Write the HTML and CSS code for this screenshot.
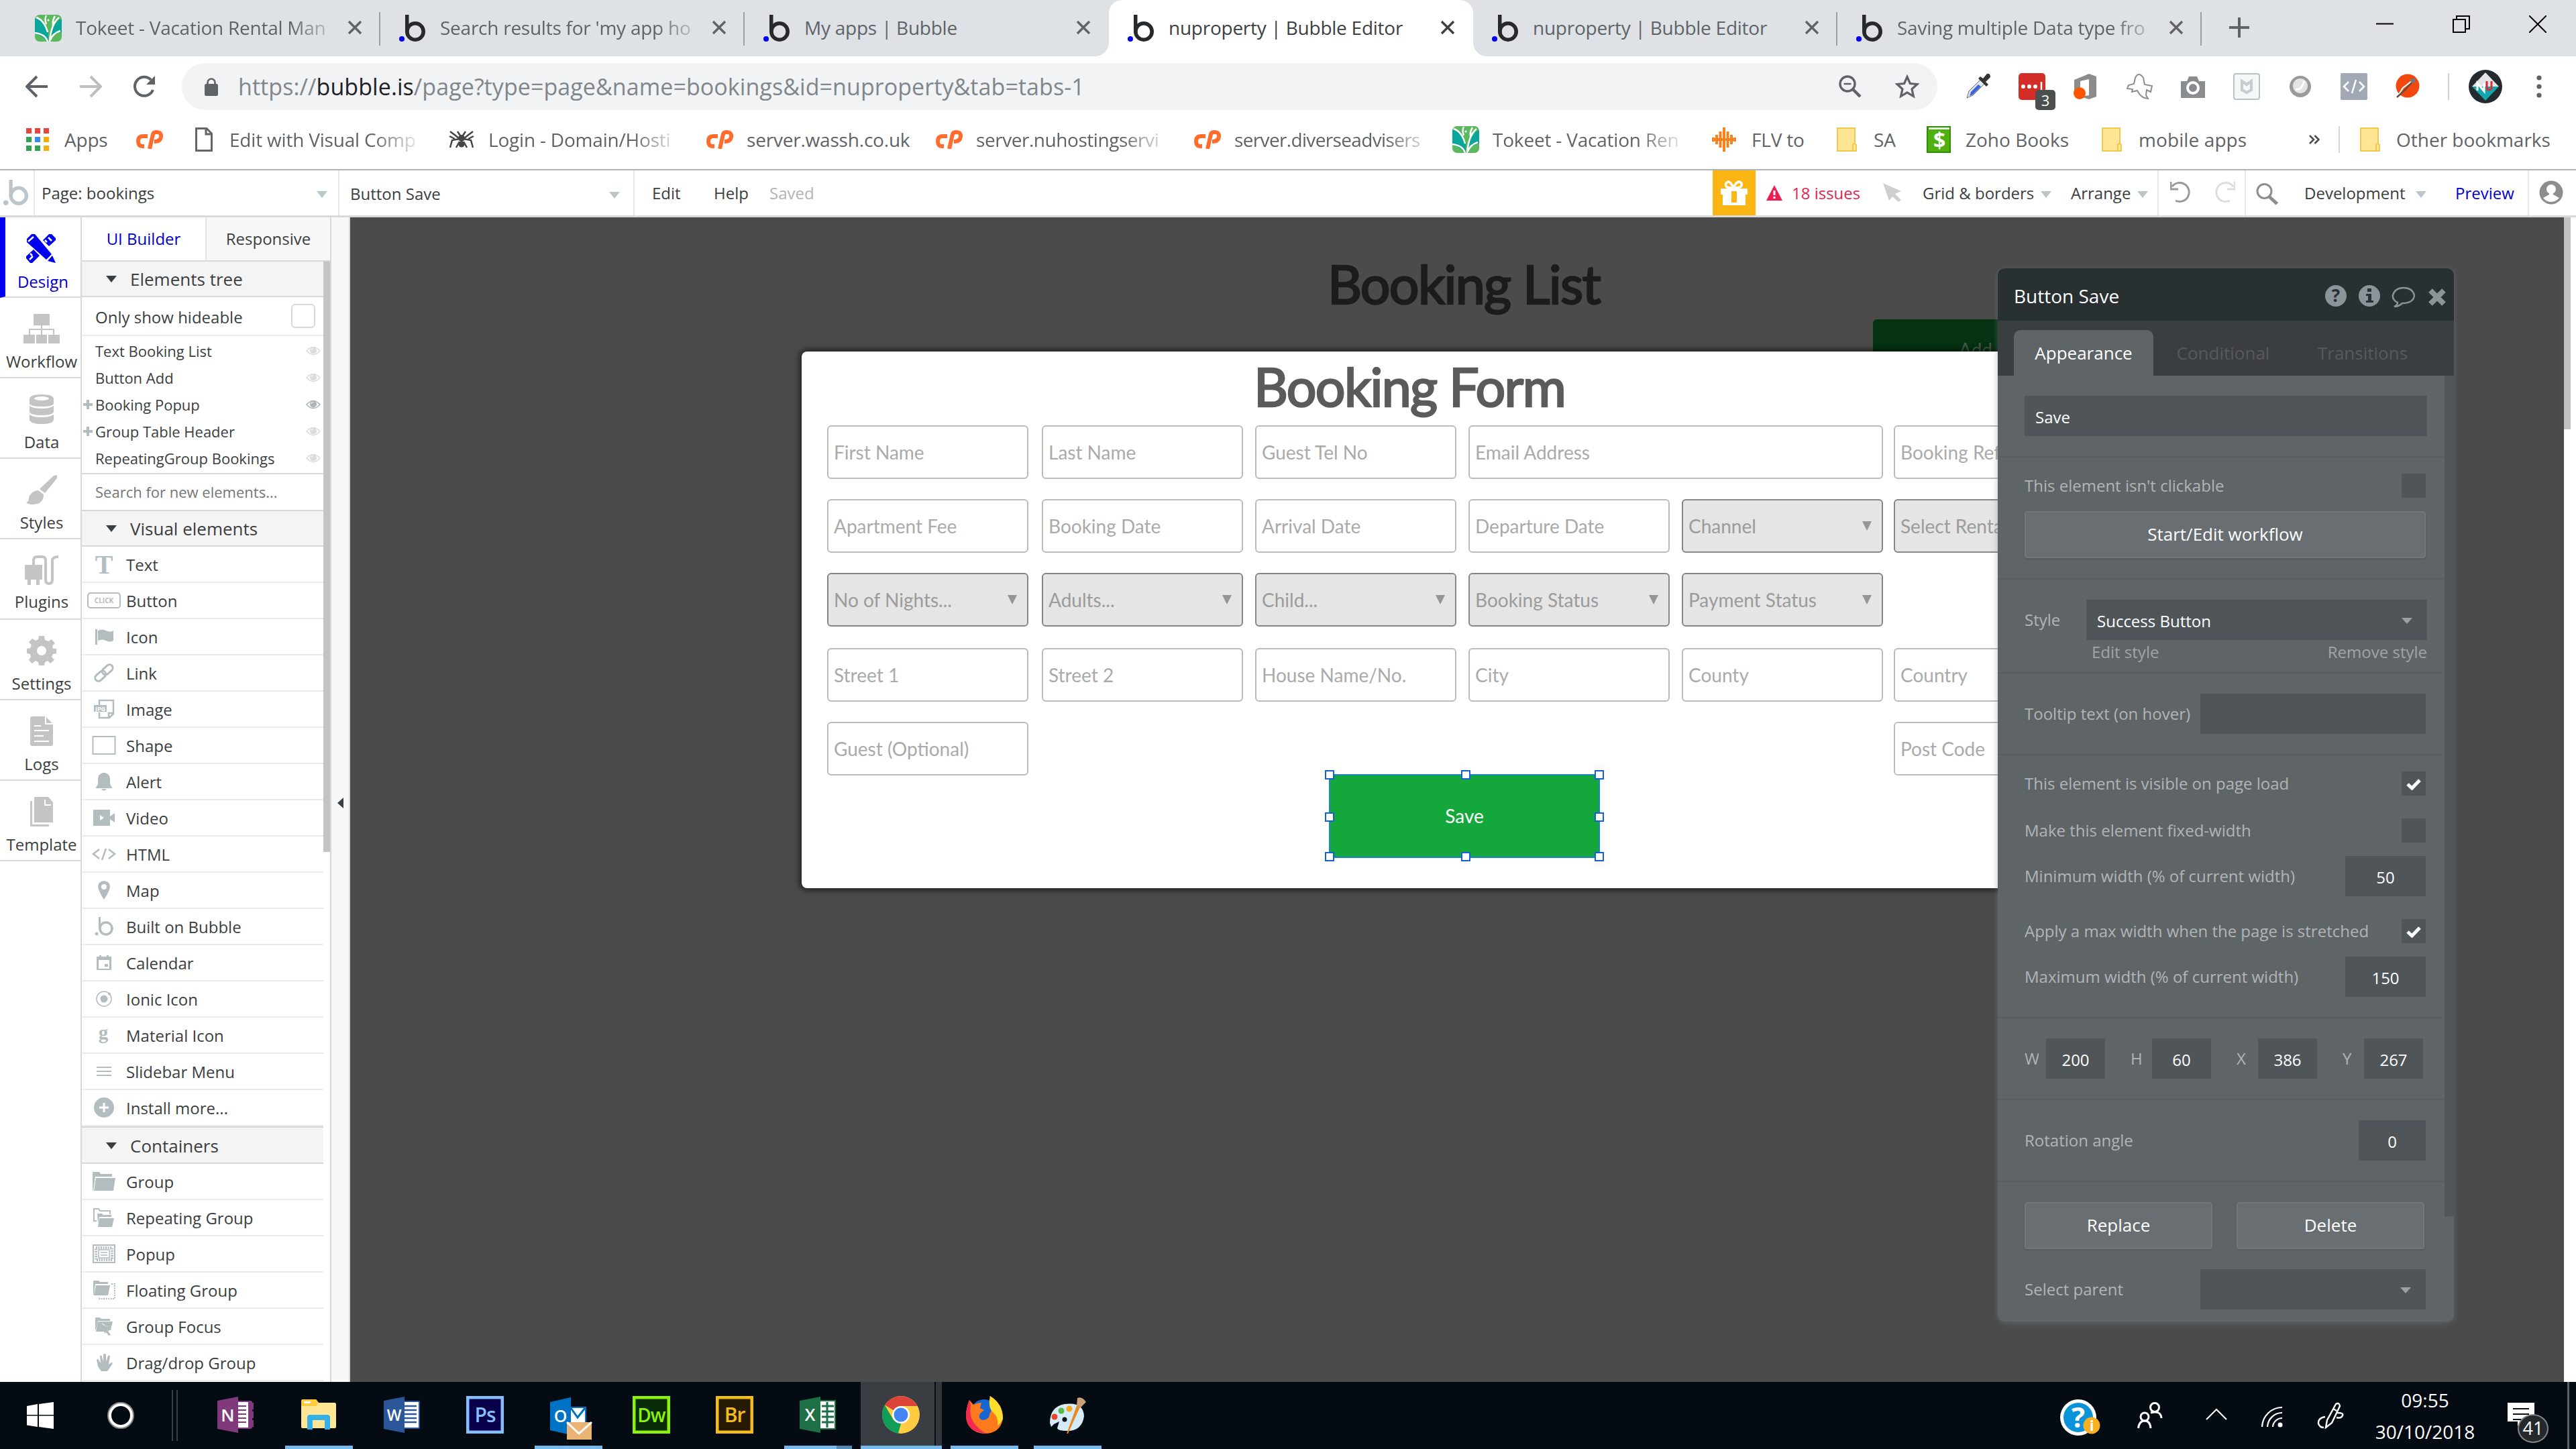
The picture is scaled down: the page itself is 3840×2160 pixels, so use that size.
FILE: index.html
```html
<!DOCTYPE html>
<html lang="en">
<head>
  <meta charset="UTF-8">
  <title>nuproperty | Bubble Editor</title>
  <link rel="stylesheet" href="styles.css">
</head>
<body>
  <!-- Shared icons -->
  <svg class="sprite" xmlns="http://www.w3.org/2000/svg">
    <symbol id="i-bubble" viewBox="0 0 40 40"><rect x="9" width="5.5" height="26"/><circle cx="24" cy="25" r="12.2" fill="none" stroke="currentColor" stroke-width="5.6"/><circle class="dot" cx="4" cy="36" r="4"/></symbol>
    <symbol id="i-tokeet" viewBox="0 0 40 40"><rect width="40" height="40" rx="7" fill="#5cb85f"/><path d="M2 5Q10 6 15 16L20 26V40Q8 30 0 28V6ZM38 6Q28 14 26 24L24 34Q32 27 40 26V8Z" fill="#0ba69b"/><path d="M0 27Q16 29 19 40M2 4Q14 8 19 26M36 4Q24 14 22 40M38 24Q26 28 23 38M17 14Q14 6 17 1M27 16Q26 8 30 2" fill="none" stroke="#fff" stroke-width="2.4"/><circle cx="20" cy="8" r="1.6" fill="#fff"/><circle cx="27" cy="10" r="1.6" fill="#fff"/></symbol>
    <symbol id="i-x" viewBox="0 0 22 22"><path d="M2 2L20 20M20 2L2 20" fill="none" stroke="currentColor" stroke-width="3.4"/></symbol>
    <symbol id="i-cp" viewBox="0 0 40 28"><path d="M17 9H10Q3 9 3 16.500T9 24H12M20 28L25 6Q26 3 30 3 38 3 37 10 36 17 27 17" fill="none" stroke="#ff6c2c" stroke-width="6"/></symbol>
    <symbol id="i-folder" viewBox="0 0 30 36"><path d="M1 1H27V24L29 26V35H1Z" fill="#ffe594" stroke="#efc94f" stroke-width="2"/><path d="M24 35V26Q24 24 27 24" fill="none" stroke="#efc94f" stroke-width="2"/></symbol>
    <symbol id="i-eye" viewBox="0 0 22 16"><path d="M1 8Q11-3 21 8 11 19 1 8Z" fill="none" stroke="currentColor" stroke-width="1.6"/><circle cx="11" cy="7.500" r="5"/><path d="M8 7Q8 4.500 11 4.500" fill="none" stroke="#fff"/></symbol>
    <symbol id="i-check" viewBox="0 0 22 18"><path d="M2 9L8.500 15 20 3" fill="none" stroke="#fff" stroke-width="5"/></symbol>
  </svg>

  <!-- Browser tabs -->
  <div class="tabstrip">
    <div class="tab"><svg class="fav"><use href="#i-tokeet"/></svg><span class="fade">Tokeet - Vacation Rental Man</span><svg class="tab-x"><use href="#i-x"/></svg></div>
    <div class="tab"><svg class="fav"><use href="#i-bubble"/></svg><span class="fade">Search results for 'my app ho</span><svg class="tab-x"><use href="#i-x"/></svg></div>
    <div class="tab before-active"><svg class="fav"><use href="#i-bubble"/></svg><span>My apps | Bubble</span><svg class="tab-x"><use href="#i-x"/></svg></div>
    <div class="tab active"><svg class="fav"><use href="#i-bubble"/></svg><span>nuproperty | Bubble Editor</span><svg class="tab-x"><use href="#i-x"/></svg></div>
    <div class="tab"><svg class="fav"><use href="#i-bubble"/></svg><span>nuproperty | Bubble Editor</span><svg class="tab-x"><use href="#i-x"/></svg></div>
    <div class="tab"><svg class="fav"><use href="#i-bubble"/></svg><span class="fade">Saving multiple Data type fro</span><svg class="tab-x"><use href="#i-x"/></svg></div>
    <svg class="new-tab" viewBox="0 0 32 32"><path d="M16 1V31M1 16H31" stroke="#5f6368" stroke-width="4"/></svg>
    <div class="win-buttons">
      <svg viewBox="0 0 26 26"><path d="M0 12.500H26" stroke="#000" stroke-width="2"/></svg>
      <svg viewBox="0 0 26 26"><path d="M1 6H19V25H1ZM6 6V1H25V20H19" fill="none" stroke="#000" stroke-width="2"/></svg>
      <svg viewBox="0 0 26 26"><path d="M0 0L26 26M26 0L0 26" stroke="#000" stroke-width="2"/></svg>
    </div>
  </div>

  <!-- Address bar -->
  <div class="toolbar">
    <svg class="nav-ico" viewBox="0 0 34 34"><path d="M33 17H3M17 2L2 17 17 32" fill="none" stroke="#5f6368" stroke-width="4"/></svg>
    <svg class="nav-ico" viewBox="0 0 34 34"><path d="M1 17H31M17 2L32 17 17 32" fill="none" stroke="#bcbec0" stroke-width="4"/></svg>
    <svg class="nav-ico" viewBox="0 0 34 34"><path d="M30 22A14 14 0 1 1 27 7" fill="none" stroke="#5f6368" stroke-width="4"/><path d="M33 1V14H20Z" fill="#5f6368"/></svg>
    <div class="omnibox">
      <svg class="lock" viewBox="0 0 20 27"><rect y="9" width="20" height="18" rx="2.500" fill="#5f6368"/><path d="M4.500 10V7A5.500 5.500 0 0 1 15.500 7V10" fill="none" stroke="#5f6368" stroke-width="2.600"/></svg>
      <div class="url">https://<b>bubble.is</b>/page?type=page&amp;name=bookings&amp;id=nuproperty&amp;tab=tabs-1</div>
      <svg class="omni-zoom" viewBox="0 0 34 34"><circle cx="13" cy="13" r="11" fill="none" stroke="#5f6368" stroke-width="3.400"/><path d="M7.500 13H18.500" stroke="#5f6368" stroke-width="2.500"/><path d="M21 21L32 32" stroke="#5f6368" stroke-width="4.500"/></svg>
      <svg class="omni-star" viewBox="0 0 36 36"><path d="M18 3.500L22.400 13.500 33 14.500 25 21.700 27.400 32.500 18 26.900 8.600 32.500 11 21.700 3 14.500 13.600 13.500Z" fill="none" stroke="#5f6368" stroke-width="3.200"/></svg>
    </div>
    <div class="extensions">
      <svg viewBox="0 0 40 40"><path d="M3 37L6 27 23 10 29 16 12 33Z" fill="#dfe6f5" stroke="#667"/><path d="M7 34L9 28 20 17 24 20 12 32Z" fill="#3b66d6"/><path d="M20 8L32 20 35 17 31 13 38 6Q38 0 33 1L27 8 23 5Z" fill="#333"/></svg>
      <div class="ext-pass"><svg viewBox="0 0 40 40"><rect width="40" height="40" rx="5" fill="#d32d27"/><circle cx="7" cy="20" r="3" fill="#fff"/><circle cx="16" cy="20" r="3" fill="#fff"/><circle cx="25" cy="20" r="3" fill="#fff"/><path d="M34 13V27" stroke="#fff" stroke-width="2.500"/></svg><span>3</span></div>
      <svg viewBox="0 0 40 40"><path d="M3 10L25 1 36 5V35L25 39 12 35 25 33V9L12 12V28L3 31Z" fill="#8c8c8c"/><circle cx="11" cy="30" r="9" fill="#ff5400"/></svg>
      <svg viewBox="0 0 40 40"><path d="M14 7Q19-3 26 7L28 17 39 19 37 28 31 25 30 33 33 38Q23 38 17 26L9 28 10 24 2 23 4 18 12 16Z" fill="#fff" stroke="#8d8d8d" stroke-width="2"/></svg>
      <svg viewBox="0 0 40 40"><path d="M2 12H11L14 5H26L29 12H38V37H2Z" fill="#8a8d8f"/><circle cx="20" cy="22" r="8" fill="none" stroke="#fff" stroke-width="4"/></svg>
      <svg viewBox="0 0 40 40"><rect x="1" y="1" width="38" height="38" rx="3" fill="#f4f7f8" stroke="#b8c2c7" stroke-width="2"/><path d="M13 12L20 17 27 12V25L20 29 13 25Z" fill="none" stroke="#c6cdd1" stroke-width="4"/></svg>
      <svg viewBox="0 0 40 40"><circle cx="20" cy="20" r="16" fill="#9a9a9a"/><circle cx="20" cy="19" r="11" fill="#e4e4e4"/><path d="M13 24Q22 26 26 12" fill="none" stroke="#fff" stroke-width="3"/></svg>
      <svg viewBox="0 0 40 40"><rect width="40" height="40" rx="2" fill="#a2a9b4"/><path d="M12 13L5 20 12 27M28 13L35 20 28 27M23 10L17 30" fill="none" stroke="#fff" stroke-width="2.600"/></svg>
      <svg viewBox="0 0 40 40"><circle cx="20" cy="19" r="17.500" fill="#f2480f"/><path d="M3 38L13 22 26 12" fill="none" stroke="#fff" stroke-width="2"/><path d="M4 36L15 26 28 12" fill="none" stroke="#6d4a3a" stroke-width="2.500"/><circle cx="28" cy="11" r="3.500" fill="#777"/></svg>
    </div>
    <svg class="profile" viewBox="0 0 50 50"><circle cx="25" cy="25" r="25" fill="#252a2e"/><path d="M25 4L45 25H5Z" fill="#e3e4e6"/><path d="M5 25H45L25 46Z" fill="#12a5ab"/><path d="M13 31V20L23 32V20" fill="none" stroke="#fff" stroke-width="3"/><path d="M27 17V28Q30 32 34 28V17" fill="none" stroke="#d92c36" stroke-width="3"/></svg>
    <svg class="menu-dots" viewBox="0 0 8 34"><circle cx="4" cy="4" r="3.600"/><circle cx="4" cy="17" r="3.600"/><circle cx="4" cy="30" r="3.600"/></svg>
  </div>

  <!-- Bookmarks -->
  <div class="bookmarks">
    <div class="bm bm-apps"><svg class="s34" viewBox="0 0 34 34"><path d="M0 0h8v8H0zM13 0h8v8h-8zM26 0h8v8h-8z" fill="#e8453c"/><path d="M0 13h8v8H0zM0 26h8v8H0zM13 26h8v8h-8z" fill="#32a350"/><path d="M13 13h8v8h-8z" fill="#3b8bea"/><path d="M26 13h8v8h-8zM26 26h8v8h-8z" fill="#f4ae0c"/></svg><span>Apps</span></div>
    <div class="bm bm-cp"><svg class="cp"><use href="#i-cp"/></svg></div>
    <div class="bm bm-edit"><svg class="page-ico" viewBox="0 0 26 36"><path d="M1.500 1.500H17L24.500 9V34.500H1.500ZM16 1.500V10H24" fill="none" stroke="#666" stroke-width="3"/></svg><span class="fade">Edit with Visual Comp</span></div>
    <div class="bm bm-login"><svg class="s40" viewBox="0 0 40 30"><path d="M3 3L11 9 17 14 6 16 3 27M37 3L29 9 23 14 34 16 37 27M2 10L10 14M38 10L30 14" fill="none" stroke="#444" stroke-width="2.500"/><circle cx="20" cy="13" r="5" fill="#444"/><circle cx="20" cy="22" r="4.500" fill="#444"/><path d="M12 27L17 18M28 27L23 18M14 3L18 9M26 3L22 9" stroke="#444" stroke-width="2.500"/></svg><span class="fade">Login - Domain/Hosti</span></div>
    <div class="bm bm-wassh"><svg class="cp"><use href="#i-cp"/></svg><span>server.wassh.co.uk</span></div>
    <div class="bm bm-nuhost"><svg class="cp"><use href="#i-cp"/></svg><span class="fade">server.nuhostingservi</span></div>
    <div class="bm bm-diverse"><svg class="cp"><use href="#i-cp"/></svg><span class="fade">server.diverseadvisers</span></div>
    <div class="bm bm-tokeet"><svg class="s40"><use href="#i-tokeet"/></svg><span class="fade">Tokeet - Vacation Ren</span></div>
    <div class="bm bm-flv"><svg class="s36" viewBox="0 0 36 36"><path d="M2 15V21M7 11V25M12.500 6V30M18 0V36M23.500 6V30M29 11V25M34 15V21" stroke="#f5821f" stroke-width="4"/><path d="M0 18H36" stroke="#f5821f" stroke-width="4"/></svg><span>FLV to</span></div>
    <div class="bm bm-sa"><svg class="folder"><use href="#i-folder"/></svg><span>SA</span></div>
    <div class="bm bm-zoho"><svg class="zoho" viewBox="0 0 36 40"><rect width="36" height="40" fill="#2f8d0b"/><rect x="2" y="5" width="32" height="33" fill="#50b010"/><path d="M3 2H34V5H3Z" fill="#e9f3e2"/><text x="19" y="33" text-anchor="middle">$</text></svg><span>Zoho Books</span></div>
    <div class="bm bm-mobile"><svg class="folder"><use href="#i-folder"/></svg><span>mobile apps</span></div>
    <svg class="bm-more" viewBox="0 0 16 14"><path d="M1 1L7 7 1 13M8.500 1L14.500 7 8.500 13" fill="none" stroke="#4a4d51" stroke-width="2.600"/></svg>
    <div class="bm bm-other"><svg class="folder"><use href="#i-folder"/></svg><span>Other bookmarks</span></div>
  </div>

  <!-- Editor top bar -->
  <div class="topbar">
    <div class="tb tb-logo"><svg><use href="#i-bubble"/></svg></div>
    <div class="tb tb-page">Page: bookings<i class="caret"></i></div>
    <div class="tb tb-element">Button Save<i class="caret"></i></div>
    <div class="tb tb-menu"><span>Edit</span><span>Help</span><span class="saved">Saved</span></div>
    <div class="tb tb-gift"><svg viewBox="0 0 40 38"><path d="M0 13H40V22H37V38H3V22H0ZM16 17V34H24V17Z" fill="#fff" fill-rule="evenodd"/><path d="M19 12Q5 13 8 5 13-1 19 12Q25-1 31 5 33 13 19 12" fill="none" stroke="#fff" stroke-width="3.500"/></svg></div>
    <div class="tb tb-issues"><svg viewBox="0 0 24 23"><path d="M12 0L24 23H0Z" fill="#f01e50"/><path d="M12 8V15M12 17V20" stroke="#fff" stroke-width="3"/></svg>18 issues</div>
    <div class="tb tb-cursor"><svg viewBox="0 0 28 28"><path d="M0 0L27 12 18 16 27 25 23 28 14 20 9 26Z" fill="#cfcfcf"/></svg></div>
    <div class="tb tb-grid">Grid &amp; borders<i class="caret"></i></div>
    <div class="tb tb-arrange">Arrange<i class="caret"></i></div>
    <div class="tb tb-undo">
      <svg viewBox="0 0 32 32"><path d="M3 7A14 14 0 1 1 8 28" fill="none" stroke="#999" stroke-width="3"/><path d="M1 0V11H12" fill="none" stroke="#999" stroke-width="3"/></svg>
      <svg viewBox="0 0 32 32"><path d="M29 7A14 14 0 1 0 24 28" fill="none" stroke="#ddd" stroke-width="3"/><path d="M31 0V11H20" fill="none" stroke="#ddd" stroke-width="3"/></svg>
    </div>
    <div class="tb tb-search"><svg viewBox="0 0 32 32"><circle cx="12" cy="12" r="10.500" fill="none" stroke="#8d8d8d" stroke-width="3"/><path d="M19 20L31 31" stroke="#8d8d8d" stroke-width="5"/></svg></div>
    <div class="tb tb-dev">Development<i class="caret"></i></div>
    <div class="tb tb-preview">Preview</div>
    <div class="tb tb-user"><svg viewBox="0 0 36 36"><circle cx="18" cy="18" r="17.500" fill="#8d8d8d"/><circle cx="18" cy="13" r="7" fill="#fff"/><path d="M15 15H21V21L30 26Q25 32 18 32T6 26L15 21Z" fill="#fff"/></svg></div>
  </div>

  <div class="workspace">
    <!-- Left navigation -->
    <div class="nav">
      <div class="nav-item active"><svg viewBox="0 0 44 44"><path d="M1 8L8 1H13L38 31 30 39 1 13ZM39 33L44 44 32 41ZM25 10L34 1H38L44 7V10L34 19ZM11 24L20 33 9 44H6L0 37V34Z"/><path d="M33 6L38 11M28 10L31 13M6 30L9 33M5 39L10 34M3 12L11 5" stroke="#fff" stroke-width="2.500" fill="none"/></svg><span>Design</span></div>
      <div class="nav-item"><svg viewBox="0 0 54 44"><path d="M15 0H39V17H15ZM0 31H17V44H0ZM19 31H35V44H19ZM37 31H54V44H37ZM8 22H46V31H44V24H28V31H26V24H10V31H8ZM26 17H28V23H26Z"/></svg><span>Workflow</span></div>
      <div class="nav-item"><svg viewBox="0 0 36 44"><path d="M0 7Q0 0 18 0T36 7V13Q36 18 18 18T0 13ZM0 17Q5 21 18 21T36 17V26Q34 31 18 31T0 26ZM0 30Q5 34 18 34T36 30V38Q34 44 18 44T0 38Z"/><ellipse cx="18" cy="6" rx="11" ry="3" fill="#fff"/></svg><span>Data</span></div>
      <div class="nav-item"><svg viewBox="0 0 46 44"><path d="M45 0Q48 3 45 6L28 27 20 21 40 2Q43 0 45 0ZM18 23L26 29Q26 44 9 44 3 44 0 41 4 40 4 34 7 24 18 23Z"/></svg><span>Styles</span></div>
      <div class="nav-item plugins"><svg viewBox="0 0 50 44"><path d="M0 14H26V36H22V44H17V36H9V44H4V36H0Z"/><path d="M13 15V8Q13 2 18 2H26Q31 2 31 8V36Q31 42 36 42T41 36V8Q41 2 50 2" fill="none" stroke="#c4c4c4" stroke-width="4"/></svg><span>Plugins</span></div>
      <div class="nav-item"><svg viewBox="0 0 44 44"><path d="M18 0H26L27 6 32 8 37 5 42 11 38 15 39 19 44 19V26L39 27 37 31 41 36 35 41 31 37 27 39 26 44H18L17 39 13 37 8 41 3 36 6 31 5 27 0 26V19L5 18 7 14 3 9 8 4 13 7 17 5ZM22 15A7 7 0 1 0 22 29 7 7 0 1 0 22 15Z" fill-rule="evenodd"/></svg><span>Settings</span></div>
      <div class="nav-item"><svg viewBox="0 0 34 44"><path d="M3 0H22V12H34V41Q34 44 31 44H3Q0 44 0 41V3Q0 0 3 0ZM24 1L33 10H24Z"/><path d="M6 21H28M6 29H20M6 37H28M6 14H16" stroke="#fff" stroke-width="2"/></svg><span>Logs</span></div>
      <div class="nav-item"><svg viewBox="0 0 34 44"><path d="M6 0H27L34 8V38H6ZM0 6H3V41H28V44H0Z"/><path d="M22 4V12H31" fill="none" stroke="#fff" stroke-width="2"/></svg><span>Template</span></div>
    </div>

    <!-- Element palette -->
    <div class="palette">
      <div class="palette-tabs"><span class="on">UI Builder</span><span>Responsive</span></div>
      <div class="palette-body">
        <div class="palette-list">
          <div class="head tree-head"><i class="caret dark"></i>Elements tree</div>
          <div class="hideable">Only show hideable<i class="box"></i></div>
          <div class="tree">
            <div>Text Booking List<svg><use href="#i-eye"/></svg></div>
            <div>Button Add<svg><use href="#i-eye"/></svg></div>
            <div class="parent open">Booking Popup<svg><use href="#i-eye"/></svg></div>
            <div class="parent">Group Table Header<svg><use href="#i-eye"/></svg></div>
            <div>RepeatingGroup Bookings<svg><use href="#i-eye"/></svg></div>
          </div>
          <div class="find">Search for new elements...</div>
          <div class="head"><i class="caret dark"></i>Visual elements</div>
          <div class="el"><svg viewBox="0 0 50 30"><text class="serif" x="25" y="29" font-size="40" text-anchor="middle">T</text></svg>Text</div>
          <div class="el"><svg viewBox="0 0 50 30"><rect x="1" y="4" width="48" height="22" rx="4" fill="none" stroke="currentColor" stroke-width="2"/><text x="25" y="19" font-size="10" font-weight="bold" text-anchor="middle">CLICK</text></svg>Button</div>
          <div class="el"><svg viewBox="0 0 50 30"><path d="M12 4H15V27H12ZM16 6Q22 3 28 6T39 6V21Q34 24 28 21T16 21Z"/></svg>Icon</div>
          <div class="el"><svg viewBox="0 0 50 30"><g fill="none" stroke="currentColor" stroke-width="3" transform="rotate(-42 25 15)"><rect x="9" y="10" width="18" height="10" rx="5"/><rect x="23" y="10" width="18" height="10" rx="5"/></g></svg>Link</div>
          <div class="el"><svg viewBox="0 0 50 30"><path d="M18 9V2H39V22L33 28H18V20M32 28V21H39" fill="none" stroke="currentColor" stroke-width="2.500"/><rect x="10" y="9" width="19" height="10"/><text x="19.500" y="17.500" font-size="9" font-weight="bold" fill="#fff" text-anchor="middle">JPG</text></svg>Image</div>
          <div class="el"><svg viewBox="0 0 50 30"><rect x="8.500" y="2" width="33" height="26" fill="none" stroke="currentColor" stroke-width="2"/></svg>Shape</div>
          <div class="el"><svg viewBox="0 0 50 30"><path d="M23 2H27Q34 4 34 12V19L37 24V25H13V24L16 19V12Q16 4 23 2ZM21 26H29Q25 31 21 26Z"/></svg>Alert</div>
          <div class="el"><svg viewBox="0 0 50 30"><path d="M9 3H34V13L41 8V22L34 17V27H9ZM19 11V19L25 15Z" fill-rule="evenodd"/></svg>Video</div>
          <div class="el"><svg viewBox="0 0 50 30"><path d="M18 8L9 15 18 22M32 8L41 15 32 22M28 7L22 24" fill="none" stroke="currentColor" stroke-width="2.500"/></svg>HTML</div>
          <div class="el"><svg viewBox="0 0 50 30"><path d="M25 1Q34 2 34 10 33 17 25 29 17 17 16 10 16 2 25 1ZM25 6A4 4 0 1 0 25 14 4 4 0 1 0 25 6Z" fill-rule="evenodd"/></svg>Map</div>
          <div class="el"><svg viewBox="0 0 50 30"><path d="M17 1H20V17H17Z"/><circle cx="28" cy="18" r="9" fill="none" stroke="currentColor" stroke-width="3.500"/><circle cx="14" cy="26" r="2.500"/></svg>Built on Bubble</div>
          <div class="el"><svg viewBox="0 0 50 30"><path d="M14 6H36V26H14ZM17 11V24H33V11ZM26 17H31V21H26ZM18 4H21V6H18ZM29 4H32V6H29Z" fill-rule="evenodd"/></svg>Calendar</div>
          <div class="el"><svg viewBox="0 0 50 30"><circle cx="25" cy="15" r="11" fill="none" stroke="currentColor" stroke-width="1.500"/><circle cx="25" cy="15" r="5.500"/><circle cx="33" cy="7.500" r="2"/></svg>Ionic Icon</div>
          <div class="el"><svg viewBox="0 0 50 30"><text class="serif" x="24" y="21" font-size="29" text-anchor="middle">g</text></svg>Material Icon</div>
          <div class="el"><svg viewBox="0 0 50 30"><path d="M14 9H36M14 15H36M14 21H36" stroke="currentColor" stroke-width="2"/></svg>Slidebar Menu</div>
          <div class="el"><svg viewBox="0 0 50 30"><circle cx="25" cy="15" r="15"/><path d="M18 15H32M25 8V22" stroke="#fff" stroke-width="3"/></svg>Install more...</div>
          <div class="head"><i class="caret dark"></i>Containers</div>
          <div class="el"><svg viewBox="0 0 50 30"><path d="M8 1H18L20 4H37V8H12L9 29H8ZM13 10H42L39 29H10Z"/></svg>Group</div>
          <div class="el"><svg viewBox="0 0 50 30"><path d="M14 20H10V2H17L19 5H34V10" fill="none" stroke="currentColor" stroke-width="2"/><path d="M15 9H22L24 11H36V14H18L16 24ZM18 16H40L37 29H16Z"/></svg>Repeating Group</div>
          <div class="el"><svg viewBox="0 0 50 30"><rect x="9" y="2" width="32" height="26" fill="none" stroke="currentColor" stroke-width="2"/><rect x="13" y="6" width="24" height="18" fill="none" stroke="currentColor" stroke-width="4" stroke-dasharray="2 1.500"/><rect x="17" y="9" width="16" height="12" fill="#fff" stroke="currentColor" stroke-width="1.500"/><path d="M20 13H30M20 17H30" stroke="currentColor" stroke-width="1.500"/></svg>Popup</div>
          <div class="el"><svg viewBox="0 0 50 30"><path d="M9 1H17L19 3H31V6H12L10 22H9ZM13 8H34L31 23H10Z"/><path d="M36 6H41V28H18V25" fill="none" stroke="currentColor" stroke-width="2" stroke-dasharray="2 1.500"/></svg>Floating Group</div>
          <div class="el"><svg viewBox="0 0 50 30"><path d="M12 2H19L21 4H34V7H16L13 20H12ZM16 8H38L35 20 22 10 27 23H13Z"/><path d="M23 12L36 20 31 22 35 28 32 29 28 24 26 26Z"/></svg>Group Focus</div>
          <div class="el"><svg viewBox="0 0 50 30"><path d="M19 5Q21 3 22 6L24 14V3Q26 1 28 3V14L31 5Q33 3 34 6L32 18 36 15Q39 15 37 18L30 28H21L16 21 14 11Q16 9 17 11L20 16Z"/></svg>Drag/drop Group</div>
        </div>
        <div class="palette-scroll"></div>
      </div>
    </div>
    <div class="collapse"><i></i></div>

    <!-- Page canvas -->
    <div class="canvas">
      <div class="page-title">Booking List</div>
      <div class="page-add">Add</div>
      <div class="popup">
        <div class="popup-title">Booking Form</div>
        <div class="fields">
          <div class="field">First Name</div><div class="field">Last Name</div><div class="field">Guest Tel No</div><div class="field wide">Email Address</div><div class="field">Booking Ref</div>
          <div class="field">Apartment Fee</div><div class="field">Booking Date</div><div class="field">Arrival Date</div><div class="field">Departure Date</div><div class="field drop">Channel</div><div class="field drop">Select Rental</div>
          <div class="field drop">No of Nights...</div><div class="field drop">Adults...</div><div class="field drop">Child...</div><div class="field drop">Booking Status</div><div class="field drop">Payment Status</div><div></div>
          <div class="field">Street 1</div><div class="field">Street 2</div><div class="field">House Name/No.</div><div class="field">City</div><div class="field">County</div><div class="field">Country</div>
          <div class="field">Guest (Optional)</div><div class="field last">Post Code</div>
        </div>
        <div class="selected">Save
          <i class="h tl"></i><i class="h tc"></i><i class="h tr"></i><i class="h ml"></i><i class="h mr"></i><i class="h bl"></i><i class="h bc"></i><i class="h br"></i>
        </div>
      </div>

      <!-- Property editor -->
      <div class="props">
        <div class="props-head">
          <span>Button Save</span>
          <svg viewBox="0 0 32 32"><circle cx="16" cy="16" r="16"/><text x="16" y="25" font-size="26" text-anchor="middle">?</text></svg>
          <svg viewBox="0 0 32 32"><circle cx="16" cy="16" r="16"/><path d="M13 5H19V10H13ZM11 13H19V23H22V26H11V23H14V16H11Z" fill="#293032"/></svg>
          <svg class="comment" viewBox="0 0 36 32"><path d="M9 24Q1 20 2 13 5 2 18 2T34 13Q33 25 16 25 11 30 4 30 9 28 9 24Z" fill="none" stroke="#8a9599" stroke-width="2.500"/></svg>
          <svg class="close" viewBox="0 0 26 26"><path d="M3 3L23 23M23 3L3 23" stroke="#8a9599" stroke-width="8"/></svg>
        </div>
        <div class="props-tabs"><span class="on">Appearance</span><span>Conditional</span><span>Transitions</span></div>
        <div class="props-body">
          <div class="props-list">
            <div class="sec"><div class="inp full">Save</div></div>
            <div class="sec checks">
              <div class="row"><span>This element isn't clickable</span><i class="chk"></i></div>
              <div class="btn">Start/Edit workflow</div>
            </div>
            <div class="sec style-sec">
              <div class="row"><span>Style</span><div class="inp style-inp">Success Button<i class="caret"></i></div></div>
              <div class="links"><span>Edit style</span><span>Remove style</span></div>
            </div>
            <div class="sec"><div class="row"><span>Tooltip text (on hover)</span><div class="inp mid"></div></div></div>
            <div class="sec checks">
              <div class="row spaced"><span>This element is visible on page load</span><i class="chk"><svg><use href="#i-check"/></svg></i></div>
              <div class="row"><span>Make this element fixed-width</span><i class="chk"></i></div>
              <div class="row spaced"><span>Minimum width (% of current width)</span><div class="inp num">50</div></div>
              <div class="row"><span>Apply a max width when the page is stretched</span><i class="chk"><svg><use href="#i-check"/></svg></i></div>
              <div class="row"><span>Maximum width (% of current width)</span><div class="inp num">150</div></div>
            </div>
            <div class="sec dims">
              <div class="dim"><span>W</span><div class="inp">200</div></div>
              <div class="dim"><span>H</span><div class="inp">60</div></div>
              <div class="dim"><span>X</span><div class="inp">386</div></div>
              <div class="dim"><span>Y</span><div class="inp">267</div></div>
            </div>
            <div class="sec"><div class="row"><span>Rotation angle</span><div class="inp rot">0</div></div></div>
            <div class="sec end">
              <div class="btns"><div class="btn">Replace</div><div class="btn">Delete</div></div>
              <div class="row"><span>Select parent</span><div class="inp mid"><i class="caret"></i></div></div>
            </div>
          </div>
          <div class="props-scroll"></div>
        </div>
      </div>
    </div>
    <div class="page-scroll"></div>
  </div>

  <!-- Windows taskbar -->
  <div class="taskbar">
    <svg class="start" viewBox="0 0 40 40"><path d="M0 6L16 3V19H0ZM18 3L40 0V19H18ZM0 20.500H16V37L0 34.500ZM18 20.500H40V40L18 37Z" fill="#fff"/></svg>
    <svg class="cortana" viewBox="0 0 40 40"><circle cx="20" cy="20" r="18.500" fill="none" stroke="#888" stroke-width="3"/><circle cx="20" cy="20" r="16" fill="none" stroke="#fff" stroke-width="4"/></svg>
    <div class="grip"></div>
    <div class="apps">
      <div class="app"><svg viewBox="0 0 56 56"><rect x="28" y="7" width="25" height="42" rx="3" fill="#80397b"/><path d="M32 9H47V47H32Z" fill="#fff"/><path d="M32 15H44M32 21H44M32 27H44M32 33H44M32 39H44" stroke="#80397b" stroke-width="2"/><path d="M49 10H55V20H49ZM49 23H55V33H49ZM49 36H55V46H49Z" fill="#80397b"/><path d="M1 7L32 1V55L1 49Z" fill="#80397b"/><text x="16" y="38" font-size="26">N</text></svg></div>
      <div class="app run"><svg viewBox="0 0 56 56"><path d="M2 8Q2 5 5 5H24L28 10H52Q54 10 54 13V46Q54 48 52 48H4Q2 48 2 46Z" fill="#ffe694"/><path d="M2 8Q2 5 5 5H24L28 10 24 15H2Z" fill="#ffcb3d"/><path d="M11 50V32Q11 28 15 28H41Q45 28 45 32V50H37V36H19V50Z" fill="#35b1e8"/><rect x="6" y="8" width="10" height="3" fill="#fff"/></svg></div>
      <div class="app"><svg viewBox="0 0 56 56"><rect x="28" y="7" width="27" height="42" rx="2" fill="#2b579a"/><path d="M32 9H53V47H32Z" fill="#fff"/><path d="M32 15H50M32 21H50M32 27H50M32 33H50M32 39H50" stroke="#2b579a" stroke-width="2.500"/><path d="M1 7L32 1V55L1 49Z" fill="#2b579a"/><text x="16" y="37" font-size="23">W</text></svg></div>
      <div class="app"><svg viewBox="0 0 56 56"><rect x="2" y="2" width="52" height="52" fill="#08004a" stroke="#86bdfb" stroke-width="5"/><text x="28" y="39" font-size="30" class="ps">Ps</text></svg></div>
      <div class="app run"><svg class="wide" viewBox="0 0 64 64"><path d="M30 16H54V40H30Z" fill="#fff" stroke="#0072c6" stroke-width="2"/><path d="M32 17L42 31 53 17" fill="none" stroke="#0072c6" stroke-width="3"/><path d="M1 8L32 1V57L1 50Z" fill="#0072c6"/><text x="16" y="38" font-size="25">O</text><rect x="26" y="38" width="37" height="26" fill="#e9b474"/><path d="M26 38L44 55 63 38" fill="none" stroke="#fff" stroke-width="3"/></svg></div>
      <div class="app"><svg viewBox="0 0 56 56"><rect x="2" y="2" width="52" height="52" fill="#0a2b08" stroke="#8cf20a" stroke-width="5"/><text x="28" y="39" font-size="28" class="dw">Dw</text></svg></div>
      <div class="app"><svg viewBox="0 0 56 56"><rect x="2" y="2" width="52" height="52" fill="#261a04" stroke="#f5bd14" stroke-width="5"/><text x="28" y="39" font-size="30" class="brd">Br</text></svg></div>
      <div class="app run stack"><svg viewBox="0 0 56 56"><rect x="28" y="7" width="26" height="42" fill="#fff" stroke="#1e7145" stroke-width="2"/><path d="M34 15H52M34 23H52M34 31H52M34 39H52M42 9V47" stroke="#1e7145" stroke-width="3"/><path d="M1 7L32 1V55L1 49Z" fill="#1e7145"/><text x="16" y="37" font-size="25">X</text></svg></div>
      <div class="app run current"><svg viewBox="0 0 56 56"><circle cx="28" cy="28" r="28" fill="#fc4"/><path d="M28 28L4 13.500A28 28 0 0 1 52.500 15H28Z" fill="#db4437"/><path d="M4 13.500L17 36 28 41 24 55.700A28 28 0 0 1 4 13.500Z" fill="#0f9d58"/><circle cx="28" cy="28" r="13" fill="#fff"/><circle cx="28" cy="28" r="10.500" fill="#4285f4"/></svg></div>
      <div class="app run"><svg viewBox="0 0 56 56"><circle cx="28" cy="25" r="20" fill="#1666d2"/><path d="M6 6L12 13Q18 10 24 10L22 18 28 21 22 26Q18 34 26 36 36 35 36 27L42 16 36 0Q56 10 56 34 52 56 28 56 3 54 1 30 1 18 6 6Z" fill="#ff7a1c"/><path d="M6 6L8 14Q5 32 16 44T34 56Q26 56 20 54 1 48 1 30 1 18 6 6Z" fill="#f42a50"/><path d="M37 0Q56 12 56 34 52 42 48 44 50 32 42 25 33 18 37 0Z" fill="#ffdf2c"/></svg></div>
      <div class="app run"><svg viewBox="0 0 56 56"><path d="M2 40Q2 16 24 12 52 8 53 30 50 52 28 52 14 52 13 48L16 38 8 42 4 46Z" fill="#d6ebf8"/><circle cx="24" cy="35" r="3.500" fill="#0a1119"/><circle cx="9" cy="31" r="4.500" fill="#e8432d"/><circle cx="19" cy="22" r="4.500" fill="#57b947"/><circle cx="31" cy="19" r="4.500" fill="#f6a71c"/><path d="M44 12L28 56 47 14Z" fill="#e68a25" stroke="#e68a25" stroke-width="2"/><path d="M43 3Q50 0 56 9L48 17 42 14Z" fill="#c9a077"/></svg></div>
    </div>
    <div class="tray">
      <svg class="help" viewBox="0 0 60 56"><circle cx="27" cy="28" r="27" fill="#fff"/><circle cx="27" cy="28" r="22" fill="#0a93d8"/><text x="27" y="43" font-size="42">?</text><circle cx="47" cy="40" r="12.500" fill="#f7b022"/><text x="47" y="48" font-size="22">i</text></svg>
      <svg class="people" viewBox="0 0 38 40"><g fill="none" stroke="#fff" stroke-width="3"><circle cx="26" cy="8" r="6.500"/><circle cx="11" cy="22" r="6"/><path d="M1.500 39Q3 28 11 28T20 39M20 16Q35 12 36 24"/></g></svg>
      <svg class="chev" viewBox="0 0 32 18"><path d="M1 17L16 2 31 17" fill="none" stroke="#fff" stroke-width="2.200"/></svg>
      <svg class="wifi" viewBox="0 0 32 32"><g fill="none" stroke="#fff" stroke-width="2.200"><path d="M1 31A30 30 0 0 1 31 2M9 31A22 22 0 0 1 31 10M17 31A14 14 0 0 1 31 18"/></g><circle cx="28" cy="28" r="3.500" fill="#fff"/></svg>
      <svg class="pen" viewBox="0 0 40 40"><path d="M13 38L15 27 28 3Q33 0 34 6L22 31ZM24 10L29 13M12 22Q1 24 2 32 4 38 10 38M30 16Q40 16 38 20 36 25 29 23" fill="none" stroke="#fff" stroke-width="2.400"/></svg>
      <div class="clock"><span>09:55</span><span>30/10/2018</span></div>
      <div class="notes"><svg viewBox="0 0 40 36"><path d="M0 0H40V28H22L15 35V28H0Z" fill="#fff"/><path d="M8 9H32M8 17H32M8 25H22" stroke="#0a1119" stroke-width="2"/></svg><span>41</span></div>
      <div class="peek"></div>
    </div>
  </div>
</body>
</html>
```

FILE: styles.css
```css
* { margin: 0; padding: 0; box-sizing: border-box; }
body {
  width: 3840px;
  height: 2160px;
  overflow: hidden;
  display: flex;
  flex-direction: column;
  font-family: "Open Sans", "Noto Sans", sans-serif;
  font-size: 24px;
  color: #3b3e40;
  background: #fff;
  white-space: nowrap;
}
svg { display: block; flex: none; fill: currentColor; }
.sprite { position: absolute; width: 0; height: 0; }
.fade {
  -webkit-mask-image: linear-gradient(to right, #000 calc(100% - 75px), transparent);
  mask-image: linear-gradient(to right, #000 calc(100% - 75px), transparent);
}
.caret {
  width: 0;
  height: 0;
  flex: none;
  border: 8px solid transparent;
  border-top: 10px solid #bcc6ca;
  border-bottom: 0;
}

/* Tabs */
.tabstrip {
  height: 84px;
  display: flex;
  flex: none;
  padding-left: 24px;
  background: #dee1e6;
  font-size: 28px;
  letter-spacing: -0.25px;
  color: #5f6368;
}
.tab {
  width: 543px;
  height: 84px;
  display: flex;
  align-items: center;
  padding: 0 27px 2px 28px;
  position: relative;
}
.tab::after {
  content: "";
  position: absolute;
  right: 0;
  top: 18px;
  width: 2px;
  height: 50px;
  background: #9a9da2;
}
.tab span { width: 396px; margin-left: 21px; }
.fav { width: 40px; height: 40px; margin-top: 2px; color: #27292b; }
.dot { fill: var(--dot, #0000ee); }
.tab-x { width: 22px; height: 22px; margin-left: auto; }
.tab.active { background: #fff; border-radius: 20px 20px 0 0; color: #3c4043; }
.tab.active::after {
  left: -20px;
  right: -20px;
  top: 64px;
  width: auto;
  height: 20px;
  background:
    radial-gradient(circle at 0 0, transparent 19.5px, #fff 20px) left / 20px 20px no-repeat,
    radial-gradient(circle at 100% 0, transparent 19.5px, #fff 20px) right / 20px 20px no-repeat;
}
.before-active::after { display: none; }
.new-tab { width: 32px; height: 32px; margin: 25px 0 0 40px; }
.win-buttons { display: flex; gap: 88px; margin: 23px 44px 0 auto; }
.win-buttons svg { width: 26px; height: 26px; }

/* Address bar */
.toolbar { height: 90px; flex: none; display: flex; align-items: center; padding-left: 38px; }
.nav-ico { width: 34px; height: 34px; margin-right: 46px; }
.omnibox {
  width: 2617px;
  height: 70px;
  margin-left: -7px;
  padding: 0 27px 0 34px;
  border-radius: 35px;
  background: #f1f3f4;
  display: flex;
  align-items: center;
}
.lock { width: 20px; height: 27px; }
.url { margin-left: 30px; font-size: 34px; letter-spacing: 0.07px; color: #80868b; flex: 1; }
.url b { font-weight: 400; color: #202124; }
.omni-zoom { width: 34px; height: 34px; margin-right: 50px; }
.omni-star { width: 36px; height: 36px; }
.extensions { display: flex; margin-left: 41px; gap: 40px; padding-right: 40px; border-right: 2px solid #cfd1d4; }
.extensions svg { width: 40px; height: 40px; }
.ext-pass { position: relative; }
.ext-pass span {
  position: absolute;
  left: 25px;
  top: 25px;
  width: 30px;
  height: 30px;
  border-radius: 5px;
  background: #4c4f50;
  color: #fff;
  font-size: 22px;
  line-height: 30px;
  text-align: center;
}
.profile { width: 50px; height: 50px; margin-left: 29px; }
.menu-dots { width: 8px; height: 34px; margin-left: 51px; color: #5f6368; }

/* Bookmarks */
.bookmarks {
  height: 80px;
  flex: none;
  display: flex;
  align-items: center;
  padding: 0 0 10px 39px;
  border-bottom: 2px solid #b2b3b4;
  font-size: 28px;
  letter-spacing: -0.2px;
  color: #5f6368;
}
.bm { display: flex; align-items: center; height: 50px; flex: none; }
.bm span { margin-left: 20px; }
.s34 { width: 34px; height: 34px; }
.s36 { width: 36px; height: 36px; }
.s40 { width: 40px; height: 40px; }
.cp { width: 40px; height: 28px; }
.page-ico { width: 26px; height: 36px; }
.folder { width: 30px; height: 36px; }
.zoho { width: 36px; height: 40px; }
.zoho text { fill: #fff; font: bold 32px "Open Sans", sans-serif; }
.bm-apps { width: 164px; }
.bm-apps span { margin-left: 23px; }
.bm-cp { width: 88px; }
.bm-edit { width: 377px; }
.bm-edit span { margin-left: 25px; width: 290px; }
.bm-login { width: 385px; }
.bm-login span { width: 290px; }
.bm-wassh { width: 342px; }
.bm-nuhost { width: 385px; letter-spacing: -0.45px; }
.bm-nuhost span { width: 292px; }
.bm-diverse { width: 385px; letter-spacing: -0.65px; }
.bm-diverse span { width: 300px; }
.bm-tokeet { width: 387px; }
.bm-tokeet span { width: 292px; }
.bm-flv { width: 186px; }
.bm-flv span { margin-left: 23px; }
.bm-sa { width: 134px; }
.bm-sa span { margin-left: 25px; }
.bm-zoho { width: 261px; }
.bm-zoho span { margin-left: 22px; letter-spacing: 0; }
.bm-mobile { width: 309px; }
.bm-mobile span { margin-left: 25px; letter-spacing: 0.1px; }
.bm-more { width: 16px; height: 14px; }
.bm-other { margin-left: 28px; padding-left: 30px; border-left: 2px solid #d6d7d9; height: 40px; }
.bm-other span { margin-left: 24px; letter-spacing: 0; }

/* Editor top bar */
.topbar { height: 70px; flex: none; display: flex; border-bottom: 3px solid #d9d9d9; }
.tb { display: flex; align-items: center; padding-bottom: 1px; flex: none; }
.tb .caret { margin-top: 5px; }
.tb-logo { --dot: #bcc6ca; width: 52px; padding-left: 5px; border-right: 2px solid #e5e8ea; color: #bcc6ca; }
.tb-logo svg { width: 38px; height: 38px; }
.tb-page { width: 454px; justify-content: space-between; padding: 0 16px 1px 10px; border-right: 2px solid #e5e8ea; }
.tb-element { width: 440px; justify-content: space-between; padding: 2px 20px 0 16px; border-right: 2px solid #e5e8ea; }
.tb-menu { width: 1607px; padding-left: 26px; }
.tb-menu span { width: 92px; }
.tb-menu .saved { width: auto; margin-left: -9px; color: #b3b3b3; }
.tb-gift { width: 64px; justify-content: center; background: #fbb614; }
.tb-gift svg { width: 40px; height: 38px; }
.tb-issues { width: 190px; padding-left: 16px; color: #e3244f; }
.tb-issues svg { width: 24px; height: 23px; margin-right: 14px; }
.tb-cursor { width: 59px; }
.tb-cursor svg { width: 28px; height: 28px; }
.tb-grid { width: 221px; gap: 10px; padding-bottom: 0; }
.tb-arrange { width: 131px; gap: 10px; padding-bottom: 0; border-right: 2px solid #e5e8ea; }
.tb-undo { width: 130px; padding-left: 17px; gap: 33px; border-right: 2px solid #e5e8ea; }
.tb-undo svg { width: 32px; height: 32px; }
.tb-search { width: 87px; padding-left: 15px; }
.tb-search svg { width: 33px; height: 32px; margin-top: 4px; }
.tb-dev { width: 225px; gap: 15px; }
.tb-preview { width: 110px; color: #0000cc; border-right: 2px solid #e5e8ea; }
.tb-user { padding-left: 15px; }
.tb-user svg { width: 36px; height: 36px; }

/* Workspace */
.workspace { height: 1736px; flex: none; display: flex; overflow: hidden; }
.nav { width: 122px; border-right: 2px solid #d8d8d8; flex: none; }
.nav-item {
  height: 120px;
  padding: 24px 0 0 4px;
  border-bottom: 2px solid #d8d8d8;
  display: flex;
  flex-direction: column;
  align-items: center;
  color: #c4c4c4;
}
.nav-item svg { height: 44px; max-width: 56px; }
.nav-item span { color: #3b3e40; line-height: 32px; margin-top: 11px; }
.nav-item.plugins span { margin-top: 9px; }
.nav-item.active { border-left: 8px solid #0000ee; color: #0000ee; padding-left: 0; }
.nav-item.active svg { margin-right: 6px; }
.nav-item.active span { color: #0000cc; margin-top: 12px; }

.palette { width: 372px; flex: none; border-right: 2px solid #d8d8d8; }
.palette-tabs { height: 66px; display: flex; border-bottom: 2px solid #d8d8d8; }
.palette-tabs span { flex: 1; line-height: 63px; text-align: center; background: #f8f8f8; }
.palette-tabs .on { background: #fff; color: #0000cc; border-right: 2px solid #e3e3e3; }
.palette-body { display: flex; height: 1670px; overflow: hidden; }
.palette-list { width: 360px; }
.palette-scroll { width: 10px; height: 880px; background: #c4c4c4; }
.head {
  height: 55px;
  display: flex;
  align-items: center;
  gap: 20px;
  padding: 1px 0 0 36px;
  background: #f4f4f4;
  border-top: 2px solid #d8d8d8;
  border-bottom: 2px solid #d8d8d8;
  font-size: 26px;
}
.tree-head { height: 53px; border-top: 0; }
.caret.dark { border-top-color: #3b3e40; }
.hideable {
  height: 58px;
  display: flex;
  align-items: center;
  justify-content: space-between;
  padding: 3px 12px 0 20px;
  border-bottom: 2px solid #ebebeb;
}
.box { width: 36px; height: 36px; margin-top: -3px; border: 2px solid #d8d8d8; border-radius: 6px; }
.tree { height: 206px; padding-top: 2px; border-bottom: 2px solid #d8d8d8; font-size: 22px; }
.tree div {
  height: 40px;
  display: flex;
  align-items: center;
  justify-content: space-between;
  padding: 0 4px 0 20px;
  position: relative;
}
.tree svg { width: 22px; height: 16px; color: #dcdcdc; }
.tree .open svg { color: #adb5b8; }
.parent::before {
  content: "";
  position: absolute;
  left: 2px;
  top: 13px;
  width: 14px;
  height: 14px;
  background:
    linear-gradient(#b3bcbf, #b3bcbf) center / 14px 4px no-repeat,
    linear-gradient(#b3bcbf, #b3bcbf) center / 4px 14px no-repeat;
}
.find { height: 53px; line-height: 53px; padding-left: 20px; font-size: 22px; color: #757575; }
.el {
  height: 54px;
  display: flex;
  align-items: center;
  padding-left: 8px;
  border-bottom: 2px solid #ebebeb;
}
.el svg { width: 50px; height: 30px; margin-right: 8px; color: #b3bcbf; }
.serif { font-family: "Liberation Serif", serif; font-weight: bold; }
.el + .head { height: 56px; }
.collapse { width: 28px; flex: none; background: #f8f8f8; border-right: 2px solid #d8d8d8; padding: 865px 0 0 9px; }
.collapse i { display: block; width: 0; height: 0; border: 8px solid transparent; border-right: 9px solid #3b3e40; border-left: 0; }
.page-scroll { width: 18px; flex: none; background: linear-gradient(90deg, #c1c1c1 10px, #fff 10px) top / 18px 316px no-repeat #fff; }

/* Canvas: children sit at their own page coordinates */
.canvas { width: 3300px; flex: none; position: relative; background: #4b4b4b; overflow: hidden; font-family: Lato, sans-serif; }
.page-title, .popup-title { font-size: 79px; line-height: 96px; letter-spacing: -1.7px; -webkit-text-stroke: 2.5px; }
.page-title { position: absolute; left: 1457px; top: 51px; color: #1c1c1c; }
.page-add {
  position: absolute;
  left: 2270px;
  top: 152px;
  width: 300px;
  height: 90px;
  border-radius: 6px;
  background: #053312;
  color: #4a5a4e;
  font-size: 28px;
  line-height: 90px;
  padding-left: 128px;
}
.popup {
  position: absolute;
  left: 673px;
  top: 200px;
  width: 1966px;
  height: 800px;
  padding: 4px 0 0 38px;
  border-radius: 8px;
  background: #fff;
  box-shadow: 0 0 10px 3px rgba(0, 0, 0, 0.6);
}
.popup-title { margin-left: 636px; height: 106px; color: #5b5b5b; }
.fields {
  display: grid;
  grid-template-columns: 320px 318px 318px 318px 316px 300px;
  grid-template-rows: 110px 110px 112px 110px 80px;
}
.field {
  width: 300px;
  height: 80px;
  padding: 0 15px 0 8px;
  border: 2px solid #bbb;
  border-radius: 6px;
  display: flex;
  align-items: center;
  justify-content: space-between;
  font-size: 28px;
  color: #aaa;
}
.wide { grid-column: span 2; width: 618px; }
.last { grid-column: 6; }
.drop { background: #e5e5e5; border-color: #868686; color: #9b9b9b; }
.drop::after { content: ""; border: 7px solid transparent; border-top: 14px solid #969696; border-bottom: 0; }
.selected {
  position: absolute;
  left: 786px;
  top: 630px;
  width: 404px;
  height: 125px;
  border: 2px solid #1c86c8;
  background: #14a83c;
  color: #fff;
  font-size: 28px;
  line-height: 121px;
  text-align: center;
}
.h { position: absolute; width: 14px; height: 14px; border: 2px solid #165fd8; background: #fff; }
.tl, .tc, .tr { top: -8px; }
.bl, .bc, .br { bottom: -7px; }
.ml, .mr { top: 55px; }
.tl, .ml, .bl { left: -8px; }
.tc, .bc { left: 195px; }
.tr, .mr, .br { right: -8px; }

/* Property editor floats over the canvas */
.props {
  position: absolute;
  left: 2456px;
  top: 76px;
  width: 680px;
  height: 1570px;
  border-radius: 10px;
  overflow: hidden;
  background: #5f6467;
  box-shadow: 0 2px 8px rgba(120, 125, 128, 0.5);
  font-family: "Open Sans", sans-serif;
  color: #b0b5b7;
}
.props-head {
  height: 78px;
  display: flex;
  align-items: center;
  padding: 4px 12px 0 24px;
  background: #293032;
  color: #8a9599;
}
.props-head span { flex: 1; font-size: 28px; color: #fff; }
.props-head svg { width: 32px; height: 32px; margin-left: 18px; }
.props-head text { fill: #293032; font-weight: bold; }
.props-head .comment { width: 36px; margin-top: 4px; margin-left: 17px; }
.props-head .close { width: 26px; height: 26px; margin-left: 19px; margin-top: 3px; }
.props-tabs { height: 82px; display: flex; padding: 14px 24px 0; background: #3b3e41; }
.props-tabs span { width: 208px; line-height: 68px; font-size: 26px; text-align: center; color: #565a5c; }
.props-tabs .on { background: #5f6467; color: #fff; border-radius: 10px 10px 0 0; }
.props-body { display: flex; }
.props-list { width: 666px; }
.props-scroll { width: 14px; height: 1253px; background: #50565a; }
.sec { padding: 30px 28px 30px 40px; border-bottom: 2px solid #595e61; }
.row { display: flex; align-items: center; justify-content: space-between; }
.row span { margin-top: -2px; }
.checks { padding-top: 24px; }
.checks .row { margin-bottom: 20px; height: 36px; }
.checks .row:has(.num) { height: 60px; }
.checks .row:last-child { margin-bottom: 0; }
.checks .spaced { margin-bottom: 34px; }
.inp {
  height: 60px;
  background: #50555a;
  color: #fff;
  display: flex;
  align-items: center;
  padding: 2px 22px 0 16px;
  justify-content: space-between;
}
.inp .caret { border-top-color: #9ba0a3; border-top-width: 9px; }
.full { width: 600px; }
.mid { width: 336px; justify-content: flex-end; }
.num, .rot, .dim .inp { width: 120px; justify-content: center; padding: 2px 0 0; }
.rot { width: 100px; }
.chk { width: 36px; height: 36px; background: #50555a; padding: 10px 7px; }
.chk svg { width: 22px; height: 18px; }
.btn {
  height: 70px;
  line-height: 65px;
  border: 2px solid #72777a;
  border-radius: 4px;
  background: #696e72;
  color: #fff;
  font-size: 26px;
  text-align: center;
  box-shadow: 0 1px 3px rgba(0, 0, 0, 0.15);
}
.style-sec { padding: 30px 26px 0 40px; }
.style-inp { width: 508px; }
.links { height: 48px; display: flex; justify-content: space-between; padding: 1px 0 0 100px; color: #a0a5a7; }
.dims { display: flex; }
.dim { width: 158px; flex: none; display: flex; align-items: center; }
.dim span { width: 21px; margin: -2px 11px 0 0; overflow: hidden; }
.dim .inp { width: 88px; }
.end { border: 0; }
.btns { display: flex; gap: 36px; margin-bottom: 30px; }
.btns .btn { width: 280px; }

/* Taskbar */
.taskbar { height: 100px; flex: none; display: flex; background: #040b12; color: #fff; }
.start { width: 40px; height: 40px; margin: 30px 0 0 40px; }
.cortana { width: 40px; height: 40px; margin: 30px 0 0 80px; }
.grip { width: 9px; height: 76px; margin: 12px 24px 0 56px; border: solid #3a3f45; border-width: 0 2px; }
.apps { display: flex; }
.app { width: 124px; height: 100px; display: flex; justify-content: center; align-items: center; position: relative; }
.app svg { width: 56px; height: 56px; margin-bottom: 2px; }
.app svg.wide { width: 64px; height: 64px; margin: 8px 0 0 8px; }
.app text { fill: #fff; font-weight: 600; text-anchor: middle; letter-spacing: -1px; }
.app text.ps { fill: #86bdfb; }
.app text.dw { fill: #8cf20a; }
.app text.brd { fill: #f5bd14; }
.run::after { content: ""; position: absolute; left: 12px; bottom: 0; width: 101px; height: 5px; background: #76b9ed; }
.stack::after { background: linear-gradient(90deg, #76b9ed 78px, #5489b5 78px); }
.current { background: linear-gradient(#3a3e42, #3a3e42) 2px 0 / 110px 100px no-repeat, linear-gradient(#33373b, #33373b) 114px 0 / 9px 100px no-repeat; }
.current::after { left: 2px; width: 121px; }
.tray { display: flex; align-items: center; margin-left: auto; }
.tray text { fill: #fff; font-weight: bold; text-anchor: middle; }
.help { width: 60px; height: 56px; margin: 6px 55px 0 0; }
.people { width: 38px; height: 40px; margin-right: 64px; }
.chev { width: 32px; height: 18px; margin-right: 51px; margin-bottom: 4px; }
.wifi { width: 32px; height: 32px; margin-right: 51px; margin-top: 4px; }
.pen { width: 40px; height: 40px; margin-right: 45px; }
.clock { width: 152px; display: flex; flex-direction: column; align-items: center; font-size: 28px; line-height: 47px; padding-top: 2px; }
.notes { position: relative; margin: 0 49px 0 47px; width: 40px; height: 38px; }
.notes svg { width: 40px; height: 36px; }
.notes span {
  position: absolute;
  left: 15px;
  top: 17px;
  width: 46px;
  height: 43px;
  border: 2px solid #84878a;
  border-radius: 50%;
  background: #26292c;
  font-size: 27px;
  line-height: 38px;
  text-align: center;
}
.peek { width: 13px; height: 100px; border-left: 3px solid #5b6066; }
```
